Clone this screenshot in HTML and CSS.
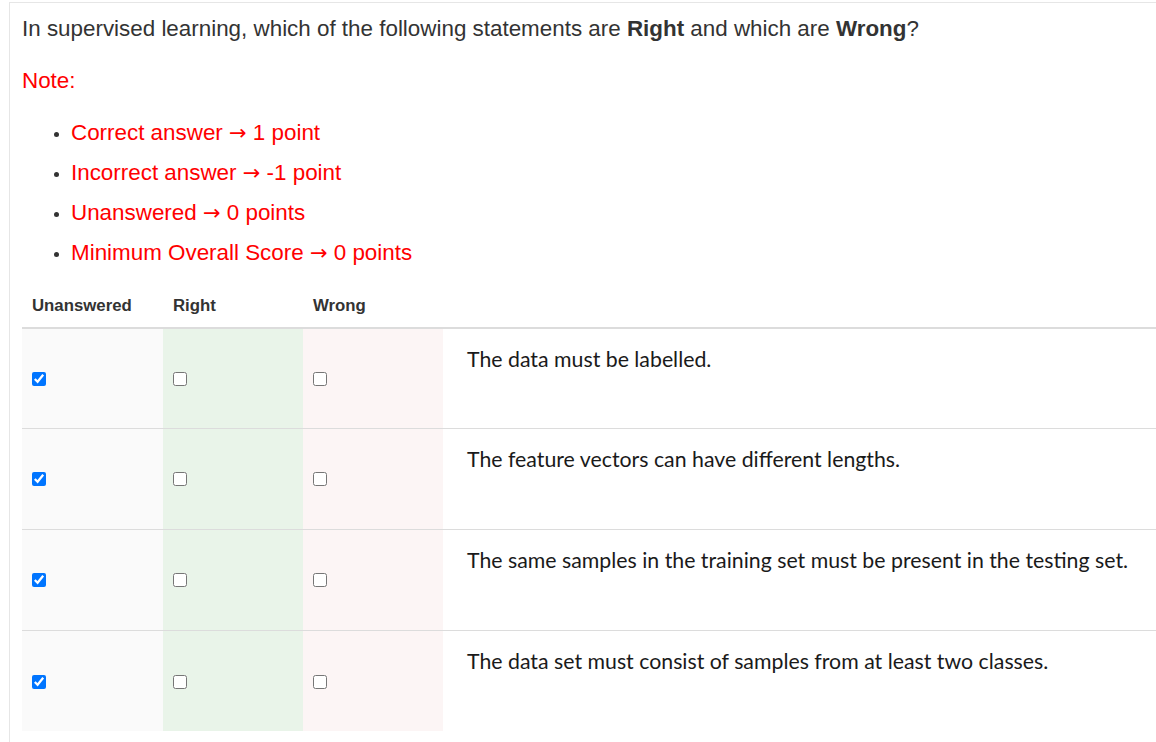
FILE: index.html
```html
<!DOCTYPE html>
<html lang="en">
<head>
<meta charset="utf-8">
<title>Question</title>
<link rel="stylesheet" href="styles.css">
</head>
<body>
<div class="que">
  <p class="qtext">In supervised learning, which of the following statements are <b>Right</b> and which are <b>Wrong</b>?</p>
  <p class="note">Note:</p>
  <ul class="rules">
    <li><span>Correct answer <i class="arr">→</i> 1 point</span></li>
    <li><span>Incorrect answer <i class="arr">→</i> -1 point</span></li>
    <li><span>Unanswered <i class="arr">→</i> 0 points</span></li>
    <li><span>Minimum Overall Score <i class="arr">→</i> 0 points</span></li>
  </ul>
  <table class="answers">
    <thead>
      <tr>
        <th class="c-un">Unanswered</th>
        <th class="c-right">Right</th>
        <th class="c-wrong">Wrong</th>
        <th class="c-text"></th>
      </tr>
    </thead>
    <tbody>
      <tr>
        <td class="c-un"><input type="checkbox" checked></td>
        <td class="c-right"><input type="checkbox"></td>
        <td class="c-wrong"><input type="checkbox"></td>
        <td class="c-text">The data must be labelled.</td>
      </tr>
      <tr>
        <td class="c-un"><input type="checkbox" checked></td>
        <td class="c-right"><input type="checkbox"></td>
        <td class="c-wrong"><input type="checkbox"></td>
        <td class="c-text">The feature vectors can have different lengths.</td>
      </tr>
      <tr>
        <td class="c-un"><input type="checkbox" checked></td>
        <td class="c-right"><input type="checkbox"></td>
        <td class="c-wrong"><input type="checkbox"></td>
        <td class="c-text">The same samples in the training set must be present in the testing set.</td>
      </tr>
      <tr>
        <td class="c-un"><input type="checkbox" checked></td>
        <td class="c-right"><input type="checkbox"></td>
        <td class="c-wrong"><input type="checkbox"></td>
        <td class="c-text">The data set must consist of samples from at least two classes.</td>
      </tr>
    </tbody>
  </table>
</div>
</body>
</html>
```

FILE: styles.css
```css
html, body {
  margin: 0;
  padding: 0;
  background: #fff;
}

body {
  font-family: "Liberation Sans", Arial, sans-serif;
  color: #333;
}

.que {
  margin: 2px 0 0 9px;
  border-top: 1px solid #e6e6e6;
  border-left: 1px solid #e6e6e6;
  padding: 11px 0 10px 12px;
  min-height: 740px;
  box-sizing: border-box;
}

.qtext {
  margin: 0;
  font-size: 22.4px;
  line-height: 30px;
}

.qtext b {
  font-weight: bold;
}

.note {
  margin: 22px 0 0;
  font-size: 22.4px;
  line-height: 30px;
  color: #ff0000;
}

.rules {
  margin: 17px 0 0;
  padding-left: 49px;
  font-size: 22.4px;
  line-height: 40px;
  color: #333;
}

.rules li::marker {
  font-size: 17px;
}

.rules span {
  color: #ff0000;
}

.rules .arr {
  font-style: normal;
  font-family: "DejaVu Sans", sans-serif;
  font-size: 21px;
}

.answers {
  margin-top: 15px;
  width: 100%;
  border-collapse: collapse;
  border-spacing: 0;
}

.answers th {
  font-size: 16.8px;
  font-weight: bold;
  line-height: 18px;
  text-align: left;
  padding: 9px 10px 12px;
  border-bottom: 2px solid #dcdcdc;
  background: #fff;
}

.answers td {
  height: 100px;
  padding: 0 10px;
  box-sizing: border-box;
  vertical-align: middle;
}

.answers tbody tr + tr td {
  border-top: 1px solid #dcdcdc;
  height: 101px;
}

.answers .c-un {
  width: 141px;
  box-sizing: border-box;
}

.answers .c-right,
.answers .c-wrong {
  width: 140px;
  box-sizing: border-box;
}

.answers td.c-un {
  background: #fafafa;
}

.answers td.c-right {
  background: #e9f4e9;
}

.answers td.c-wrong {
  background: #fcf5f5;
}

.answers td.c-text {
  vertical-align: top;
  padding: 15px 10px 0 24px;
  font-family: Lato, "Open Sans", sans-serif;
  font-size: 21.3px;
  line-height: 30px;
  color: #1a1a1a;
}

.answers input[type="checkbox"] {
  width: 14px;
  height: 14px;
  margin: 0;
  vertical-align: middle;
}
```
